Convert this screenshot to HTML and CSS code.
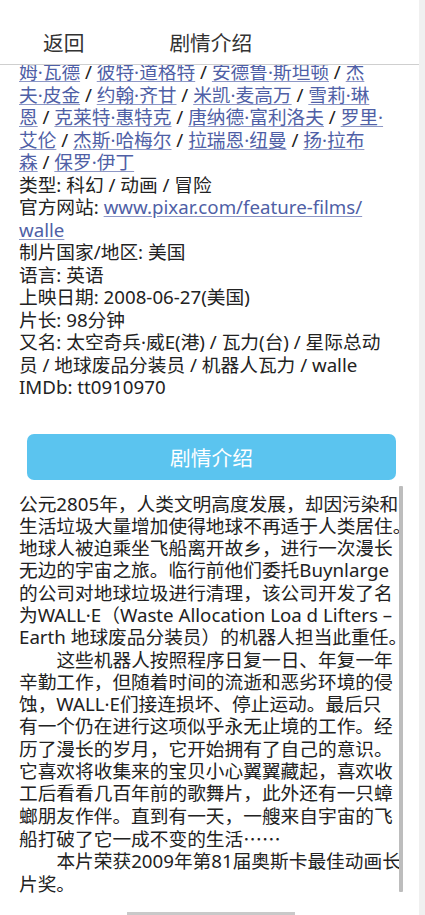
FILE: index.html
```html
<!DOCTYPE html>
<html lang="zh-CN">
<head>
    <meta charset="UTF-8">
    <meta name="viewport" content="width=device-width, initial-scale=1.0">
    <title>剧情介绍</title>
    <link rel="stylesheet" href="styles.css">
</head>
<body>
    <div class="page">
        <div class="header">
            <span class="back">返回</span>
            <span class="title">剧情介绍</span>
        </div>

        <div class="info">
            <a href="#">姆·瓦德</a> / <a href="#">彼特·道格特</a> / <a href="#">安德鲁·斯坦顿</a> / <a href="#">杰<br>夫·皮金</a> / <a href="#">约翰·齐甘</a> / <a href="#">米凯·麦高万</a> / <a href="#">雪莉·琳<br>恩</a> / <a href="#">克莱特·惠特克</a> / <a href="#">唐纳德·富利洛夫</a> / <a href="#">罗里·<br>艾伦</a> / <a href="#">杰斯·哈梅尔</a> / <a href="#">拉瑞恩·纽曼</a> / <a href="#">扬·拉布<br>森</a> / <a href="#">保罗·伊丁</a><br>
            类型: 科幻 / 动画 / 冒险<br>
            官方网站: <a href="#">www.pixar.com/feature-films/<br>walle</a><br>
            制片国家/地区: 美国<br>
            语言: 英语<br>
            上映日期: 2008-06-27(美国)<br>
            片长: 98分钟<br>
            又名: 太空奇兵·威E(港) / 瓦力(台) / 星际总动<br>
            员 / 地球废品分装员 / 机器人瓦力 / walle<br>
            IMDb: tt0910970
        </div>

        <div class="tab-button">剧情介绍</div>

        <div class="plot">
            <div class="plot-text">
                <p>公元2805年，人类文明高度发展，却因污染和<br>生活垃圾大量增加使得地球不再适于人类居住。<br>地球人被迫乘坐飞船离开故乡，进行一次漫长<br>无边的宇宙之旅。临行前他们委托Buynlarge<br>的公司对地球垃圾进行清理，该公司开发了名<br>为WALL·E（Waste Allocation Loa d Lifters –<br>Earth 地球废品分装员）的机器人担当此重任。</p>
                <p class="indent">这些机器人按照程序日复一日、年复一年<br>辛勤工作，但随着时间的流逝和恶劣环境的侵<br>蚀，WALL·E们接连损坏、停止运动。最后只<br>有一个仍在进行这项似乎永无止境的工作。经<br>历了漫长的岁月，它开始拥有了自己的意识。<br>它喜欢将收集来的宝贝小心翼翼藏起，喜欢收<br>工后看看几百年前的歌舞片，此外还有一只蟑<br>螂朋友作伴。直到有一天，一艘来自宇宙的飞<br>船打破了它一成不变的生活<span class="cjk">……</span></p>
                <p class="indent">本片荣获2009年第81届奥斯卡最佳动画长<br>片奖。</p>
            </div>
            <div class="scrollbar"></div>
        </div>

        <div class="hscroll"></div>
    </div>
</body>
</html>
```

FILE: styles.css
```css
html {
    background: #f0f0f0;
}

body {
    margin: 0;
    font-family: "Noto Sans", "Noto Sans CJK SC", sans-serif;
    color: #222;
}

.page {
    width: 419px;
    height: 915px;
    background: #fff;
    display: flex;
    flex-direction: column;
    overflow: hidden;
}

.header {
    position: relative;
    z-index: 2;
    height: 44px;
    padding: 20px 0 0 43px;
    display: flex;
    align-items: center;
    background: #fff;
    border-bottom: 1px solid #cfcfcf;
    font-size: 20.7px;
    color: #333;
    flex-shrink: 0;
}

.title {
    margin-left: 85px;
}

.info {
    margin-top: -4px;
    padding-left: 19px;
    font-size: 18.7px;
    line-height: 22.5px;
    white-space: nowrap;
}

.info a {
    color: #4f5fa6;
    text-decoration: underline;
    text-decoration-color: #8d97c6;
    text-underline-offset: 2px;
}

.tab-button {
    margin: 35px 23px 0 27px;
    height: 46px;
    border-radius: 7px;
    background: #5bc4ef;
    color: #fff;
    font-size: 20.7px;
    display: flex;
    align-items: center;
    justify-content: center;
    flex-shrink: 0;
}

.plot {
    margin: 6px 16px 0 19px;
    display: flex;
    height: 406px;
    flex-shrink: 0;
}

.plot-text {
    width: 380px;
    padding-top: 7px;
    font-size: 18.7px;
    line-height: 22.3px;
    white-space: nowrap;
}

.plot-text p {
    margin: 0;
}

.plot-text .indent {
    text-indent: 2em;
}

.cjk {
    font-family: "Noto Sans CJK SC", sans-serif;
}

.scrollbar {
    width: 4px;
    background: #bdbdbd;
    border-radius: 1px;
}

.hscroll {
    margin: 20px 0 0 127px;
    width: 168px;
    height: 3px;
    background: #c9c9c9;
    flex-shrink: 0;
}
```
